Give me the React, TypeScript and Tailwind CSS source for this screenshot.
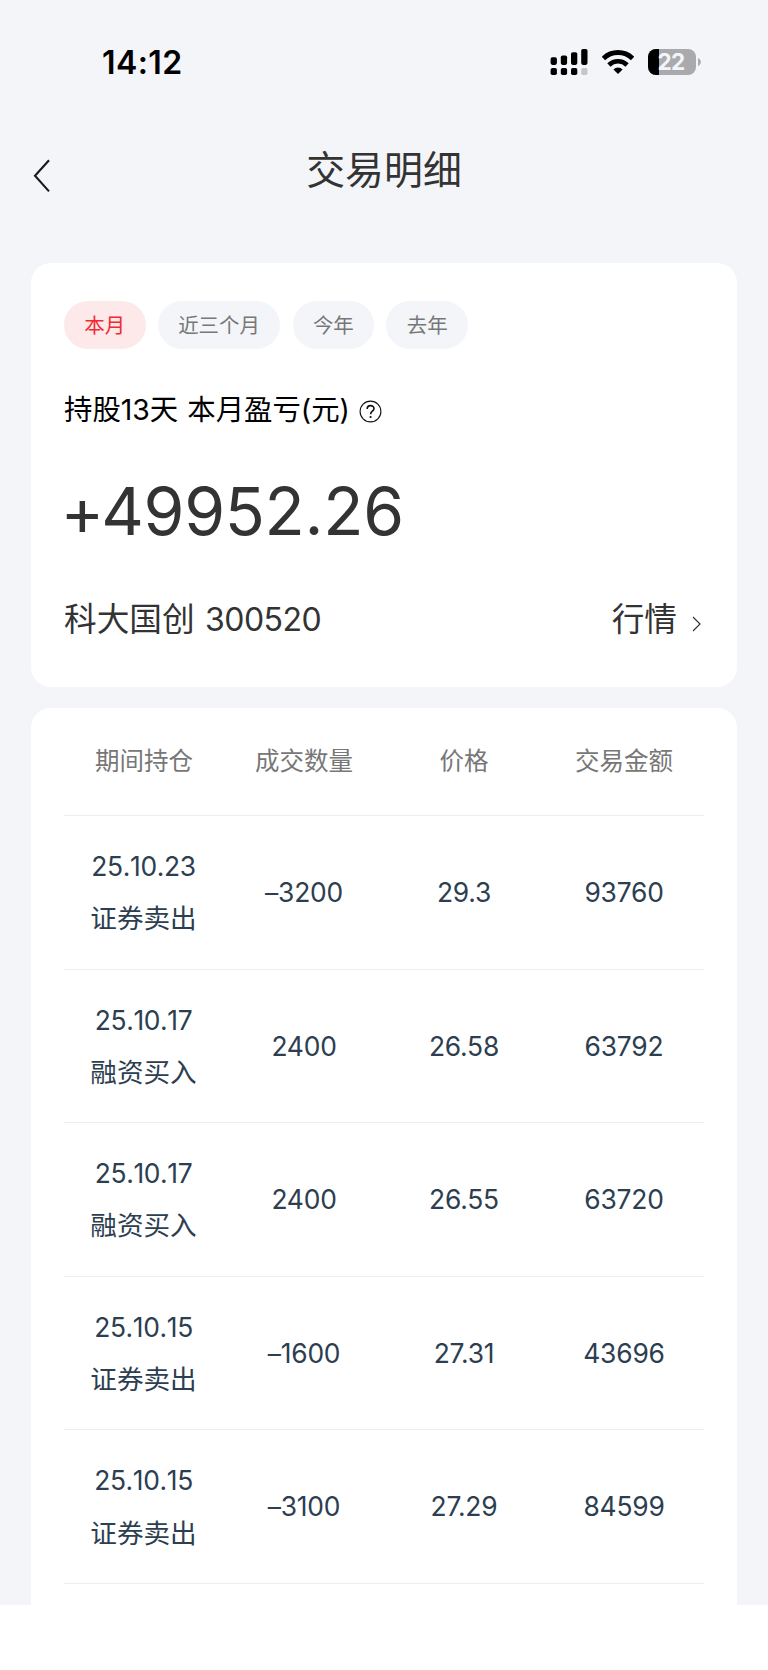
import clsx from 'clsx'

type Trade = {
  date: string
  type: string
  amount: string
  price: string
  total: string
}

const periods = ['本月', '近三个月', '今年', '去年']

const columns = ['期间持仓', '成交数量', '价格', '交易金额']

const trades: Trade[] = [
  { date: '25.10.23', type: '证券卖出', amount: '–3200', price: '29.3', total: '93760' },
  { date: '25.10.17', type: '融资买入', amount: '2400', price: '26.58', total: '63792' },
  { date: '25.10.17', type: '融资买入', amount: '2400', price: '26.55', total: '63720' },
  { date: '25.10.15', type: '证券卖出', amount: '–1600', price: '27.31', total: '43696' },
  { date: '25.10.15', type: '证券卖出', amount: '–3100', price: '27.29', total: '84599' },
]

function SignalIcon() {
  return (
    <svg width="38" height="27" viewBox="0 0 38 27">
      <rect x="0.6" y="8.3" width="6.3" height="7.6" rx="1.8" />
      <rect x="10.8" y="6.5" width="6.3" height="9.4" rx="1.8" />
      <rect x="21" y="3.2" width="6.3" height="12.7" rx="1.8" />
      <rect x="31.2" y="0" width="6.3" height="15.9" rx="1.8" />
      <rect x="0.6" y="19" width="6.3" height="7" rx="1.8" />
      <rect x="10.8" y="19" width="6.3" height="7" rx="1.8" />
      <rect x="21" y="19" width="6.3" height="7" rx="1.8" />
      <rect x="31.2" y="19" width="6.3" height="7" rx="1.8" fill="#c5c6c9" />
    </svg>
  )
}

function WifiIcon() {
  return (
    <svg width="32" height="24" viewBox="0 0 32 24" fill="none" stroke="#000" strokeWidth="4.6">
      <path d="M1.4 8.5 A20.8 20.8 0 0 1 30.6 8.5" strokeWidth="4.9" />
      <path d="M6.9 15 A13 13 0 0 1 25.1 15" />
      <path d="M16 24 L11.4 19.4 A6.8 6.8 0 0 1 20.6 19.4 Z" fill="#000" stroke="none" />
    </svg>
  )
}

function Battery() {
  return (
    <div className="flex items-center">
      <div className="relative h-[26px] w-12 overflow-hidden rounded-[8px] bg-[#a9aaae]">
        <div className="h-full w-[11px] bg-black" />
        <span className="absolute inset-0 pr-0.5 text-center text-[22.5px] leading-[26px] font-bold tracking-[-0.6px] text-[#f3f5f9]">
          22
        </span>
      </div>
      <svg className="ml-[2px]" width="3" height="8" viewBox="0 0 3 8" fill="#a9aaae">
        <path d="M0 0 C3.8 1.8 3.8 6.2 0 8 Z" />
      </svg>
    </div>
  )
}

function StatusBar() {
  return (
    <div className="flex h-[124px] items-center justify-between pr-[67px] pl-[102px]">
      <span className="pt-[2px] text-[32px] font-semibold tracking-[0.4px] text-black">14:12</span>
      <div className="flex items-center">
        <SignalIcon />
        <div className="mr-3.5 ml-3.5">
          <WifiIcon />
        </div>
        <Battery />
      </div>
    </div>
  )
}

export default function App() {
  return (
    <div className="h-[1670px] overflow-hidden bg-white font-['Inter','Noto_Sans_CJK_SC',sans-serif] font-[380] text-[#333]">
      <div className="h-[1605px] overflow-hidden bg-[#f3f5f9]">
        <StatusBar />

        {/* Nav */}
        <div className="grid h-[139px] grid-cols-[80px_1fr_80px]">
          <button className="flex pt-[34.5px] pl-[33px]">
            <svg width="18" height="34" viewBox="0 0 18 34" fill="none" stroke="#1a1a1a" strokeWidth="2.1">
              <path d="M16 1.2 L2 16.8 L16 32.4" />
            </svg>
          </button>
          <h1 className="pt-[16px] text-center text-[38.9px] leading-[60px]">交易明细</h1>
        </div>

        {/* Summary */}
        <div className="mx-[31px] h-[424px] rounded-[20px] bg-white px-[33px] pt-[38px]">
          <div className="flex gap-[12.3px]">
            {periods.map((period, i) => (
              <button
                key={period}
                className={clsx(
                  'h-[47.5px] rounded-full px-[20.3px] pt-[3px] text-[20.48px]',
                  i === 0 ? 'bg-[#fde9ea] text-[#f12a30]' : 'bg-[#f3f5f9] text-[#777]'
                )}
              >
                {period}
              </button>
            ))}
          </div>

          <div className="mt-[42px] flex h-[40px] items-center text-[28.4px] text-black">
            <span>
              持股13天 <span className="ml-px">本月盈亏(元)</span>
            </span>
            <svg className="mt-[1px] ml-[9.5px]" width="23" height="23" viewBox="0 0 23 23" fill="none" stroke="#111">
              <circle cx="11.5" cy="11.5" r="10.4" strokeWidth="1.1" />
              <path d="M8.2 8.9 C8.2 4.5 15 4.6 15 8.6 C15 11.2 11.6 11.3 11.6 14.2" strokeWidth="1.6" />
              <circle cx="11.6" cy="17" r="1.1" fill="#111" stroke="none" />
            </svg>
          </div>

          <div className="mt-[40px] -ml-[3.5px] h-[80px] text-[66px] leading-[80px] tracking-[-0.3px]">
            <span className="tracking-[-3px]">+</span>49952.26
          </div>

          <div className="mt-[44px] flex h-[50px] items-center justify-between text-[32.7px]">
            <span>
              科大国创 <span className="ml-[1px] text-[32px] tracking-[-0.5px]">300520</span>
            </span>
            <span className="flex items-center">
              行情
              <svg className="mt-[9px] mr-[2px] ml-[15px]" width="10" height="16" viewBox="0 0 10 16" fill="none" stroke="#333" strokeWidth="1.2">
                <path d="M1 1 L8 8 L1 15" />
              </svg>
            </span>
          </div>
        </div>

        {/* Trades */}
        <div className="mx-[31px] mt-[21px] h-[960px] rounded-t-[20px] bg-white px-[33px]">
          <div className="grid h-[108px] grid-cols-4 items-center border-b border-[#eeeeef] text-center text-[24.5px] text-[#777]">
            {columns.map((column) => (
              <span key={column}>{column}</span>
            ))}
          </div>
          {trades.map((trade, i) => (
            <div
              key={i}
              className="grid h-[153.6px] grid-cols-4 items-center border-b border-[#eeeeef] text-center text-[26.4px] tracking-[-0.2px] text-[#2c3e50]"
            >
              <div className="pr-px leading-[51.2px]">
                <p className="tracking-[-0.35px] [font-kerning:none]">{trade.date}</p>
                <p className="pt-px text-[26.6px] leading-[50.2px] tracking-normal">{trade.type}</p>
              </div>
              <span className="pt-px">{trade.amount}</span>
              <span className="pt-px">{trade.price}</span>
              <span className="pt-px">{trade.total}</span>
            </div>
          ))}
        </div>
      </div>
    </div>
  )
}
